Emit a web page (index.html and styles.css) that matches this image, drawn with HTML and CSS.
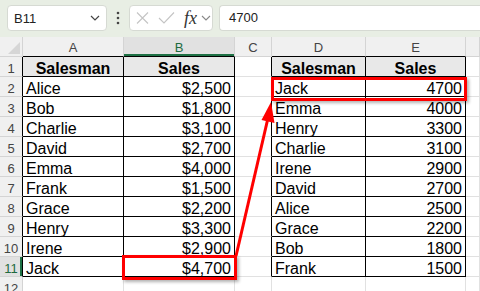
FILE: index.html
```html
<!DOCTYPE html>
<html lang="en">
<head>
    <meta charset="UTF-8">
    <title>Salesman Sales</title>
    <link rel="stylesheet" href="styles.css">
</head>
<body>
    <div class="toolbar">
        <div class="namebox">
            <span>B11</span>
            <svg class="chev" width="10" height="6" viewBox="0 0 10 6"><path d="M1 1 L5 5 L9 1" fill="none" stroke="#444" stroke-width="1.2"/></svg>
        </div>
        <div class="more">
            <svg width="4" height="14" viewBox="0 0 4 14"><circle cx="2" cy="2" r="1.3" fill="#444"/><circle cx="2" cy="7" r="1.3" fill="#444"/><circle cx="2" cy="12" r="1.3" fill="#444"/></svg>
        </div>
        <div class="fxbox">
            <svg width="13" height="12" viewBox="0 0 13 12"><path d="M1 0.5 L12 11.5 M12 0.5 L1 11.5" stroke="#c4c4c4" stroke-width="1.1"/></svg>
            <svg class="check" width="17" height="12" viewBox="0 0 17 12"><path d="M1 6 L6 11 L16 0.5" fill="none" stroke="#c4c4c4" stroke-width="1.1"/></svg>
            <span class="fx">fx</span>
            <svg class="chev-sm" width="10" height="6" viewBox="0 0 10 6"><path d="M1 1 L5 5 L9 1" fill="none" stroke="#888" stroke-width="1.1"/></svg>
        </div>
        <div class="formula">4700</div>
    </div>

    <div class="sheet">
        <div class="c h corner"></div>
        <div class="c h top">A</div>
        <div class="c h top sel">B</div>
        <div class="c h">C</div>
        <div class="c h top">D</div>
        <div class="c h top">E</div>
        <div class="c h"></div>

        <div class="c rh edge">1</div>
        <div class="c t th">Salesman</div>
        <div class="c t th">Sales</div>
        <div class="c edge"></div>
        <div class="c t th">Salesman</div>
        <div class="c t th">Sales</div>
        <div class="c"></div>

        <div class="c rh edge">2</div>
        <div class="c t">Alice</div>
        <div class="c t num">$2,500</div>
        <div class="c edge"></div>
        <div class="c t">Jack</div>
        <div class="c t num">4700</div>
        <div class="c"></div>

        <div class="c rh edge">3</div>
        <div class="c t">Bob</div>
        <div class="c t num">$1,800</div>
        <div class="c edge"></div>
        <div class="c t">Emma</div>
        <div class="c t num">4000</div>
        <div class="c"></div>

        <div class="c rh edge">4</div>
        <div class="c t">Charlie</div>
        <div class="c t num">$3,100</div>
        <div class="c edge"></div>
        <div class="c t">Henry</div>
        <div class="c t num">3300</div>
        <div class="c"></div>

        <div class="c rh edge">5</div>
        <div class="c t">David</div>
        <div class="c t num">$2,700</div>
        <div class="c edge"></div>
        <div class="c t">Charlie</div>
        <div class="c t num">3100</div>
        <div class="c"></div>

        <div class="c rh edge">6</div>
        <div class="c t">Emma</div>
        <div class="c t num">$4,000</div>
        <div class="c edge"></div>
        <div class="c t">Irene</div>
        <div class="c t num">2900</div>
        <div class="c"></div>

        <div class="c rh edge">7</div>
        <div class="c t">Frank</div>
        <div class="c t num">$1,500</div>
        <div class="c edge"></div>
        <div class="c t">David</div>
        <div class="c t num">2700</div>
        <div class="c"></div>

        <div class="c rh edge">8</div>
        <div class="c t">Grace</div>
        <div class="c t num">$2,200</div>
        <div class="c edge"></div>
        <div class="c t">Alice</div>
        <div class="c t num">2500</div>
        <div class="c"></div>

        <div class="c rh edge">9</div>
        <div class="c t">Henry</div>
        <div class="c t num">$3,300</div>
        <div class="c edge"></div>
        <div class="c t">Grace</div>
        <div class="c t num">2200</div>
        <div class="c"></div>

        <div class="c rh edge">10</div>
        <div class="c t">Irene</div>
        <div class="c t num">$2,900</div>
        <div class="c edge"></div>
        <div class="c t">Bob</div>
        <div class="c t num">1800</div>
        <div class="c"></div>

        <div class="c rh edge sel-row">11</div>
        <div class="c t">Jack</div>
        <div class="c t num">$4,700</div>
        <div class="c edge"></div>
        <div class="c t">Frank</div>
        <div class="c t num">1500</div>
        <div class="c"></div>

        <div class="c rh">12</div>
        <div class="c"></div>
        <div class="c"></div>
        <div class="c"></div>
        <div class="c"></div>
        <div class="c"></div>
        <div class="c"></div>
    </div>

    <!-- callouts drawn over the sheet -->
    <div class="callout callout-top"></div>
    <div class="callout callout-bottom"></div>
    <svg class="arrow" width="480" height="291" viewBox="0 0 480 291">
        <line x1="236" y1="256" x2="268" y2="118" stroke="#f00" stroke-width="3"/>
        <polygon points="271,102 274.5,123 261.5,120" fill="#f00"/>
    </svg>
</body>
</html>
```

FILE: styles.css
```css
body {
    margin: 0;
    width: 480px;
    height: 291px;
    overflow: hidden;
    position: relative;
    background: #fff;
    font-family: 'Liberation Sans Narrow', 'Liberation Sans', Arial, sans-serif;
    color: #000;
}
.toolbar {
    height: 37px;
    background: #e8eee4;
    display: flex;
    align-items: flex-start;
    padding-top: 5px;
    box-sizing: border-box;
    font-family: 'Liberation Sans', Arial, sans-serif;
    font-size: 13px;
    color: #222;
}
.namebox {
    margin-left: 7px;
    width: 100px;
    height: 26px;
    box-sizing: border-box;
    background: #fff;
    border: 1px solid #d6dad3;
    border-radius: 4px;
    display: flex;
    align-items: center;
    justify-content: space-between;
    padding: 0 6px 0 6px;
}
.more {
    width: 22px;
    height: 26px;
    display: flex;
    align-items: center;
    justify-content: center;
}
.fxbox {
    width: 84px;
    height: 26px;
    box-sizing: border-box;
    background: #fff;
    border: 1px solid #d6dad3;
    border-radius: 4px;
    display: flex;
    align-items: center;
    padding-left: 6px;
}
.fxbox .check {
    margin-left: 9px;
}
.fx {
    margin-left: 9px;
    font-family: 'Liberation Serif', serif;
    font-style: italic;
    font-size: 18px;
    color: #333;
}
.chev-sm {
    margin-left: 4px;
}
.formula {
    margin-left: 6px;
    flex: 1;
    height: 26px;
    box-sizing: border-box;
    background: #fff;
    border: 1px solid #d6dad3;
    border-right: none;
    border-radius: 4px 0 0 4px;
    padding-left: 9px;
    line-height: 24px;
}

.sheet {
    display: grid;
    grid-template-columns: 23px 101px 111px 37px 94px 100px 1fr;
    grid-auto-rows: 20px;
    font-size: 16px;
}
.c {
    box-sizing: border-box;
    border-right: 1px solid #e1e1e1;
    border-bottom: 1px solid #e1e1e1;
    padding: 3px 3px 0 3px;
    line-height: 17px;
    white-space: nowrap;
    overflow: hidden;
}
.h, .rh {
    background: #f0f0f0;
    border-color: #d4d4d4;
    color: #444;
    font-family: 'Liberation Sans', Arial, sans-serif;
    font-size: 13px;
    text-align: center;
}
.h {
    padding-top: 2px;
}
.rh {
    padding: 3px 0 0 0;
}
.h.top {
    border-bottom-color: #000;
}
.h.sel {
    background: #e1e1e1;
    color: #1e6b3f;
    box-shadow: inset 0 -2px 0 #1e7145;
}
.corner {
    position: relative;
}
.corner::after {
    content: '';
    position: absolute;
    right: 2px;
    bottom: 2px;
    border-left: 12px solid transparent;
    border-bottom: 12px solid #d6d6d6;
}
.edge {
    border-right-color: #000;
}
.sel-row {
    background: #e1e1e1;
    color: #1e6b3f;
    box-shadow: inset -2px 0 0 #1e7145;
}
.t {
    border-right-color: #000;
    border-bottom-color: #000;
}
.th {
    background: #e8e8e8;
    font-weight: bold;
    text-align: center;
}
.num {
    text-align: right;
}

.callout {
    position: absolute;
    border: 3px solid #f00;
    box-sizing: border-box;
    box-shadow: 2px 2px 3px rgba(0, 0, 0, 0.3);
}
.callout-top {
    left: 271px;
    top: 77px;
    width: 196px;
    height: 24px;
}
.callout-bottom {
    left: 122px;
    top: 255px;
    width: 115px;
    height: 25px;
}
.arrow {
    position: absolute;
    left: 0;
    top: 0;
    pointer-events: none;
}
```
